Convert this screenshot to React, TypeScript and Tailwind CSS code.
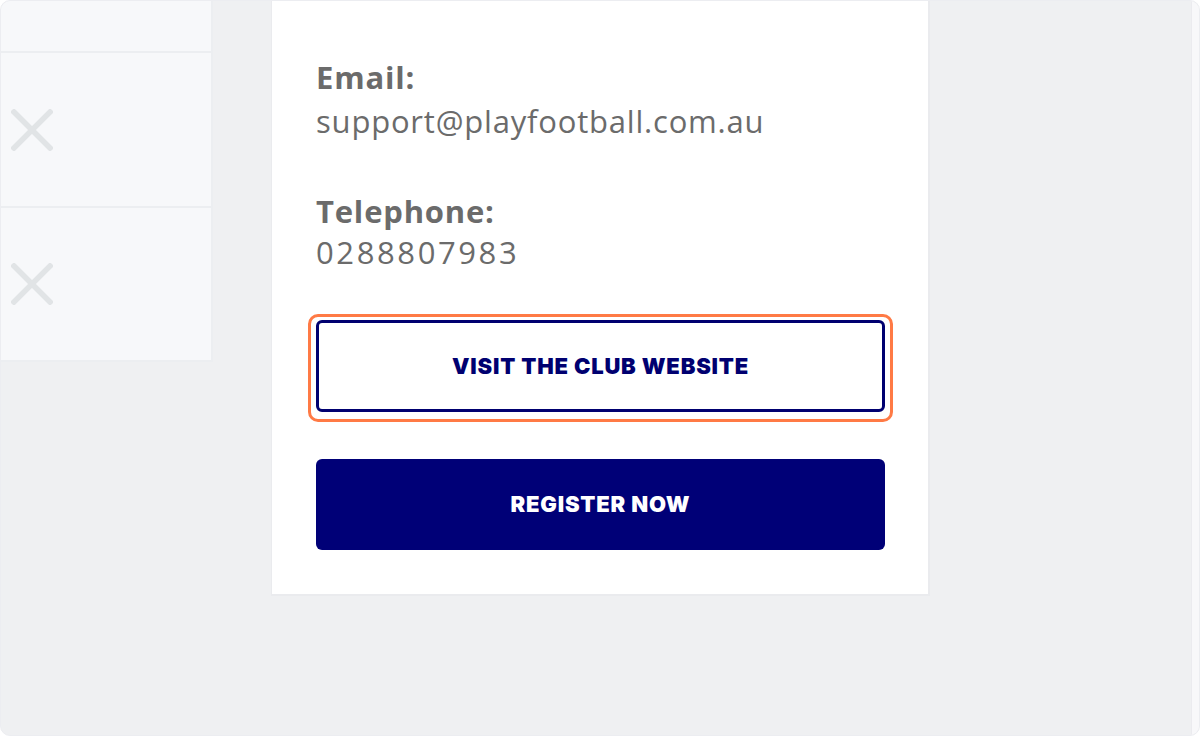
function Cross() {
  return (
    <svg width="42" height="42" viewBox="0 0 42 42" className="text-[#e1e4e6]">
      <path d="M3 3 L39 39 M39 3 L3 39" stroke="currentColor" strokeWidth="5.5" strokeLinecap="square" fill="none" />
    </svg>
  );
}

function SideRow({ height, showIcon, last }: { height: string; showIcon: boolean; last?: boolean }) {
  return (
    <div className={`${height} flex items-center pl-[10px] ${last ? '' : 'border-b-2 border-[#eceef1]'}`}>
      {showIcon && <Cross />}
    </div>
  );
}

export default function App() {
  return (
    <div className="w-[1200px] h-[736px] bg-white" style={{ fontFamily: '"Open Sans", sans-serif' }}>
      <div className="w-full h-full rounded-[10px] bg-[#eff0f2] border border-[#ecedf1] flex overflow-hidden">
        {/* left list card */}
        <div className="w-[212px] h-[361px] bg-[#f7f8fa] border-r-2 border-b-2 border-[#eceef1] rounded-tl-[8px] flex flex-col">
          <SideRow height="h-[52px]" showIcon={false} />
          <SideRow height="h-[155px]" showIcon />
          <SideRow height="h-[152px]" showIcon last />
        </div>

        {/* contact card */}
        <div className="ml-[58px] w-[659px] h-[595px] bg-white border-l border-r-2 border-b-2 border-[#eaebee] pt-[54px] pl-[44px] pr-[43px]">
          <div className="text-[#6b6b6b] text-[31px] leading-[44px] tracking-[0.8px]">
            <div className="font-bold">Email:</div>
            <div>support@playfootball.com.au</div>
          </div>
          <div className="text-[#6b6b6b] text-[31px] leading-[44px] tracking-[0.8px] mt-[46px]">
            <div className="font-bold">Telephone:</div>
            <div className="-mt-[3px] tracking-[2.6px]">0288807983</div>
          </div>

          <div className="mt-[40px] -mx-[8px] pt-[3px] px-[5px] pb-[7px] border-[3px] border-[#ff7a45] rounded-[10px]">
            <button
              className="w-full h-[92px] border-[3px] border-[#000070] rounded-[6px] bg-white text-[#000070] text-[22px] font-black tracking-[0.8px] flex items-center justify-center"
              style={{ fontFamily: 'Inter, sans-serif' }}
            >
              VISIT THE CLUB WEBSITE
            </button>
          </div>

          <button
            className="mt-[37px] w-full h-[91px] rounded-[6px] bg-[#000077] text-white text-[22px] font-black tracking-[0.8px] flex items-center justify-center"
            style={{ fontFamily: 'Inter, sans-serif' }}
          >
            REGISTER NOW
          </button>
        </div>

        <div className="flex-1" />
        {/* scrollbar track */}
        <div className="w-[8px] h-full bg-[#f8f8fa] border-l border-[#ebebef]" />
      </div>
    </div>
  );
}
